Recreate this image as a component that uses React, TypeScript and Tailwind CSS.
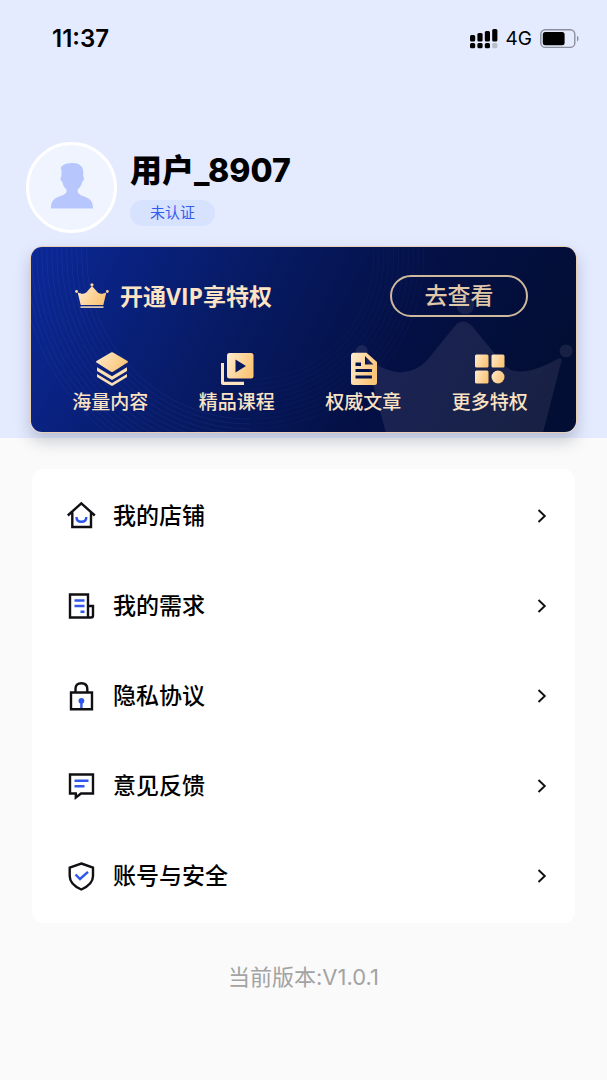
import React from 'react';

const GOLD = 'url(#gold)';

function GoldDefs() {
  return (
    <defs>
      <linearGradient id="gold" x1="0" y1="0" x2="1" y2="0.4">
        <stop offset="0" stopColor="#fdebd0" />
        <stop offset="1" stopColor="#fcc678" />
      </linearGradient>
    </defs>
  );
}

function SignalIcon() {
  const bars = [6, 4, 2, 0];
  return (
    <svg width="28" height="20" viewBox="0 0 28 20" aria-hidden="true">
      {bars.map((top, i) => (
        <g key={i}>
          <rect x={i * 7.4} y={top} width="5.200" height={12.500 - top} rx="1.500" fill="#000" />
          <rect x={i * 7.4} y="14" width="5.200" height="5.200" rx="1.500" fill={i === 3 ? '#b9bdcc' : '#000'} />
        </g>
      ))}
    </svg>
  );
}

function BatteryIcon() {
  return (
    <svg width="40" height="20" viewBox="0 0 40 20" aria-hidden="true">
      <rect x="0.8" y="0.8" width="34" height="17.6" rx="4.5" fill="none" stroke="#8d909c" strokeWidth="1.4" />
      <rect x="2.8" y="3" width="21.8" height="13.2" rx="2.5" fill="#000" />
      <path d="M37 6.8c2 .8 2 4.8 0 5.6z" fill="#8d909c" />
    </svg>
  );
}

function PersonIcon() {
  return (
    <svg width="42" height="46" viewBox="0 0 42 46" fill="#b7c7fd" aria-hidden="true">
      <path d="M10.500 3.500C12.500 1 17 0 22 0c7 0 10.500 3.800 10.200 10v3.500c1.300.7.900 4.500-.9 5.300-.8 3.300-2.300 6-4.600 7.800v2.500c1.500 3.400 6 4.200 9.300 5.600C40.500 36.500 42 40 42 45.500H0C0 40 1.500 36.500 5.500 34.700c3.300-1.400 8.300-2.200 10-5.600v-2.500c-2.300-1.800-3.600-4.500-4.300-7.800-1.800-.8-2.200-4.600-.8-5.300V6.500C9.800 6 9.700 4.200 10.500 3.500z" />
    </svg>
  );
}

function CardBackdrop() {
  const left = Array.from({ length: 14 }, (_, i) => 164 + i * 5);
  const right = Array.from({ length: 11 }, (_, i) => 124 + i * 5);
  return (
    <svg className="absolute inset-0 h-full w-full" viewBox="0 0 547 187" preserveAspectRatio="none" aria-hidden="true">
      <defs>
        <linearGradient id="night" gradientUnits="userSpaceOnUse" x1="20" y1="0" x2="480" y2="230">
          <stop offset="0" stopColor="#0b2793" />
          <stop offset="0.35" stopColor="#071b66" />
          <stop offset="0.7" stopColor="#041044" />
          <stop offset="1" stopColor="#020e33" />
        </linearGradient>
      </defs>
      <rect width="547" height="187" fill="url(#night)" />
      <g fill="none" stroke="#5b7cf0" strokeOpacity="0.11">
        {left.map((r) => (
          <path key={r} d={`M${220 - r} 10A${r} ${r} 0 0 0 220 ${10 + r}M${220 - r} 10V0`} />
        ))}
      </g>
      <g fill="none" stroke="#5b7cf0" strokeOpacity="0.05">
        {right.map((r) => (
          <path key={r} d={`M${220 + r} 10A${r} ${r} 0 0 1 220 ${10 + r}M${220 + r} 10V0`} />
        ))}
      </g>
      <g fill="#8f86a0" fillOpacity="0.16">
        <path d="M356 187L336 112Q374 140 398 114L426 79Q434 71 443 80L472 116Q486 137 529 113Q534 111 532 117L514 187Z" />
        <circle cx="436" cy="59" r="9" />
        <circle cx="332" cy="105" r="6" />
        <circle cx="537" cy="105" r="6.500" />
      </g>
    </svg>
  );
}

function CrownIcon() {
  return (
    <svg width="34" height="26" viewBox="0 0 34 26" fill={GOLD} aria-hidden="true">
      <GoldDefs />
      <path d="M2.600 9.200C7 11.600 10.500 11 12.500 8L17 3l4.500 5c2 3 5.500 3.600 9.900 1.200L28.300 22H5.700z" />
      <path d="M5.500 23.200h23V25h-23z" fill="#d5c3ac" />
      <circle cx="17" cy="1.800" r="1.600" />
      <circle cx="1.600" cy="8.500" r="1.400" />
      <circle cx="32.400" cy="8.500" r="1.400" />
    </svg>
  );
}

function LayersIcon() {
  return (
    <svg width="38" height="34" viewBox="-4 0 38 34" aria-hidden="true">
      <path d="M16 0.500Q17 0 18 .5L32.500 9q1 .8 0 1.600L18 19.700q-1 .6-2 0L1.500 10.600Q.5 9.800 1.500 9z" fill={GOLD} />
      <path d="M2 15.300L17 24.300L32 15.300v3.700L17 28L2 19zM2 21.900L17 30.900L32 21.900v3.200L18 33.600q-1 .5-2 0L2 25.100z" fill="#fcdfb4" />
    </svg>
  );
}

function VideoIcon() {
  return (
    <svg width="34" height="34" viewBox="0 0 34 34" aria-hidden="true">
      <path d="M9 1h22a2.500 2.500 0 0 1 2.500 2.500V24A2.500 2.500 0 0 1 31 26.500H9.500A2.500 2.500 0 0 1 7 24V3.500A2.500 2.500 0 0 1 9 1zM15.500 7.500v13L26 14z" fill={GOLD} fillRule="evenodd" />
      <path d="M1 11h3v18.700h20V33H3a2 2 0 0 1-2-2z" fill="#fde4c0" />
    </svg>
  );
}

function ArticleIcon() {
  return (
    <svg width="34" height="34" viewBox="0 0 34 34" aria-hidden="true">
      <path d="M7 .8h13.500L31 10v20.500a2.500 2.500 0 0 1-2.500 2.500H7.500A2.500 2.500 0 0 1 5 30.500v-27A2.600 2.600 0 0 1 7 .8zM19 4v8.500h8.500zM9.500 10.500V14H15v-3.500zM9.500 17v3h16.500v-3zM9.500 23.500v3h16.500v-3z" fill={GOLD} fillRule="evenodd" />
    </svg>
  );
}

function MoreIcon() {
  return (
    <svg width="34" height="34" viewBox="0 0 34 34" fill={GOLD} aria-hidden="true">
      <rect x="2" y="2.500" width="13.500" height="13" rx="1.500" />
      <rect x="18.500" y="2.500" width="13" height="13" rx="1.500" />
      <rect x="2" y="18.500" width="13.500" height="13" rx="1.500" />
      <circle cx="25" cy="25" r="6.500" />
    </svg>
  );
}

function LineIcon({ dark, blue, children }: { dark: string; blue: string; children?: React.ReactNode }) {
  return (
    <svg className="shrink-0 overflow-visible" width="28" height="28" viewBox="0 0 28 28" fill="none" strokeWidth="2.400" aria-hidden="true">
      <path d={dark} stroke="#101014" />
      <path d={blue} stroke="#2f57ee" />
      {children}
    </svg>
  );
}

const perks = [
  { label: '海量内容', icon: <LayersIcon /> },
  { label: '精品课程', icon: <VideoIcon /> },
  { label: '权威文章', icon: <ArticleIcon /> },
  { label: '更多特权', icon: <MoreIcon /> },
];

const menu = [
  {
    label: '我的店铺',
    icon: <LineIcon dark="M.8 13.500L14.300 1.300L27.800 13.500M5.300 10V25H24V10" blue="M9.500 15q0 4.800 4.900 4.800t4.900-4.800" />,
  },
  {
    label: '我的需求',
    icon: <LineIcon dark="M3 2.500H21V25.500H3zM21 14H26V23.500q0 2-2 2H21" blue="M7.500 8.500H17.500M7.500 14H17.500M13.500 19.800H17.500" />,
  },
  {
    label: '隐私协议',
    icon: (
      <LineIcon dark="M4 10.500H25V27.200H4zM8.500 10.500V7q0-5.800 5.900-5.800T20.300 7V10.500" blue="M14.400 19V26">
        <circle cx="14.400" cy="18.800" r="2.900" fill="#2f57ee" />
      </LineIcon>
    ),
  },
  {
    label: '意见反馈',
    icon: <LineIcon dark="M3 2.500H26V21.500H14L8.800 25.500V21.500H3z" blue="M7.500 8.800H21.500M7.500 14.200H17.500" />,
  },
  {
    label: '账号与安全',
    icon: <LineIcon dark="M14.300 1.500L26 5.500V14C26 20 21 24.500 14.300 27.500C7.500 24.500 2.700 20 2.700 14V5.500z" blue="M8.500 12.500L13 17L21 9.800" />,
  },
];

export default function App() {
  return (
    <div className="min-h-screen bg-[#fafafa] font-[Inter,'Noto_Sans_CJK_SC',sans-serif] text-black">
      <header className="bg-[#e5ebff] pb-[5px]">
        <div className="flex h-[78px] items-center justify-between pr-[27px] pl-[52px]">
          <time className="text-[24px] leading-7 font-semibold">11:37</time>
          <div className="flex items-center gap-2">
            <SignalIcon />
            <span className="text-[19px] leading-6">4G</span>
            <BatteryIcon />
          </div>
        </div>

        <div className="flex items-start gap-[13px] px-[26px] pt-16">
          <div className="flex size-[91px] items-center justify-center rounded-full border-[3px] border-white bg-[#f0f4ff] pb-[3px]">
            <PersonIcon />
          </div>
          <div className="flex flex-col items-start gap-[10px] pt-[10px]">
            <h1 className="text-[32px] leading-[38px] font-extrabold">用户_8907</h1>
            <span className="rounded-full bg-[#d7e2ff] px-5 text-[15px] leading-[26px] text-[#345bf0]">未认证</span>
          </div>
        </div>

        <section className="relative mx-[30px] mt-[13px] rounded-xl border border-[#e8cfb4] shadow-[0_8px_16px_rgba(20,30,60,0.22)]">
          <div className="absolute inset-0 overflow-hidden rounded-[11px]">
            <CardBackdrop />
          </div>
          <div className="relative pt-7 pr-[23px] pb-[15px] pl-4 text-[#fce3c3]">
            <div className="flex items-center justify-between pr-[25px] pl-7">
              <div className="flex items-center gap-[11px]">
                <CrownIcon />
                <h2 className="font-['Open_Sans','Noto_Sans_CJK_SC',sans-serif] text-[23px] leading-8 font-semibold">
                  开通<span className="font-bold">VIP</span>享特权
                </h2>
              </div>
              <button type="button" className="h-[42px] w-[138px] rounded-full border-2 border-[#cfb99c] text-[23px] leading-8 font-medium text-[#e0c9aa]">
                去查看
              </button>
            </div>
            <ul className="mt-[35px] grid grid-cols-4">
              {perks.map((p) => (
                <li key={p.label} className="flex flex-col items-center gap-[3px]">
                  {p.icon}
                  <span className="text-[19px] leading-7 font-medium">{p.label}</span>
                </li>
              ))}
            </ul>
          </div>
        </section>
      </header>

      <main className="px-8 pt-[31px]">
        <nav className="rounded-xl bg-white py-[2px]">
          {menu.map((m) => (
            <a key={m.label} href="#" className="flex h-[90px] items-center gap-[18px] pr-7 pl-[35px]">
              {m.icon}
              <span className="flex-1 text-[23px] leading-8 font-medium">{m.label}</span>
              <svg width="10" height="14" viewBox="0 0 10 14" fill="none" stroke="#111" strokeWidth="1.900" aria-hidden="true">
                <path d="M1.500 1L7.800 7L1.500 13" />
              </svg>
            </a>
          ))}
        </nav>
        <p className="py-10 text-center text-[22px] leading-7 text-[#a3a3a3]">当前版本:V1.0.1</p>
      </main>
    </div>
  );
}
